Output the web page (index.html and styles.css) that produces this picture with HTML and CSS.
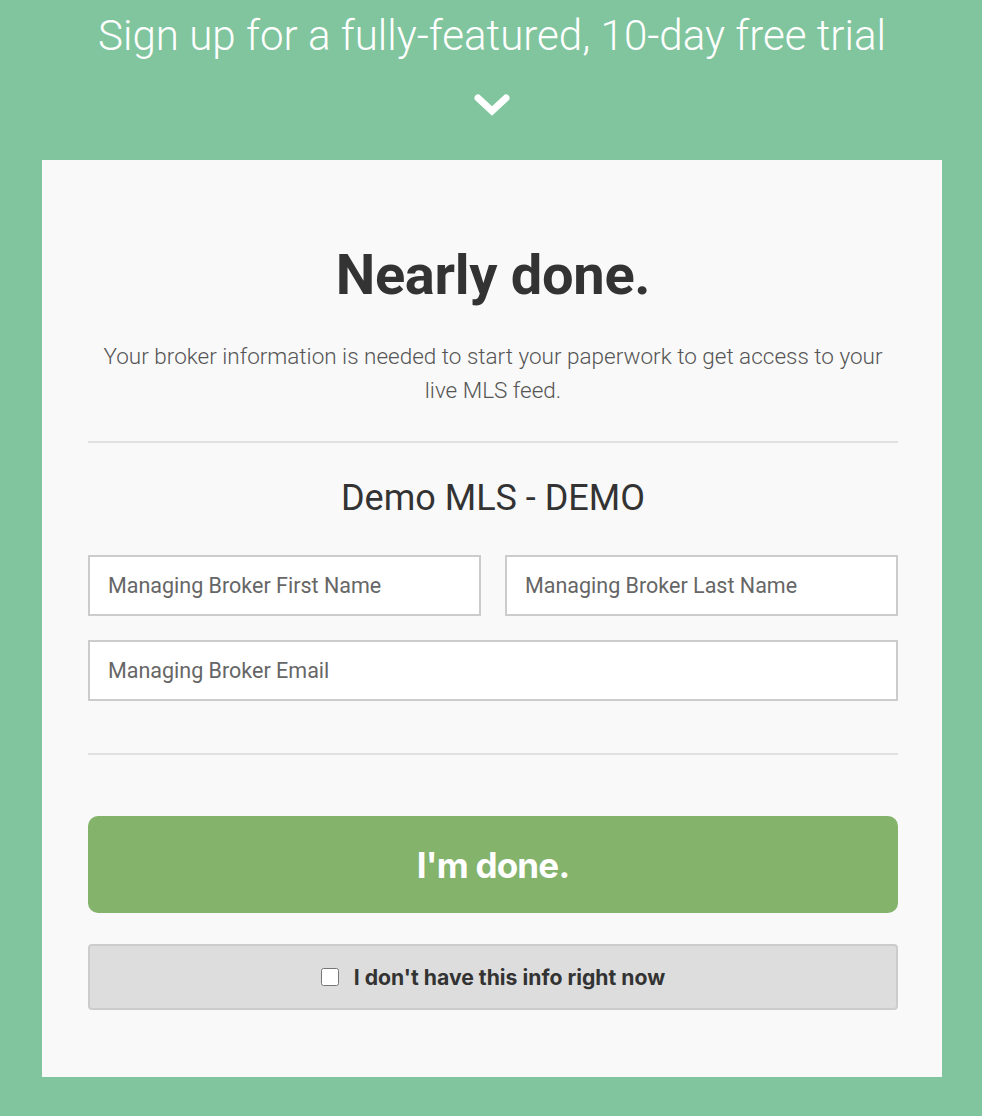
FILE: index.html
```html
<!DOCTYPE html>
<html lang="en">
<head>
<meta charset="utf-8">
<title>Nearly done</title>
<link rel="stylesheet" href="styles.css">
</head>
<body>
<div class="page">
  <header class="hero">
    <h2 class="hero-title">Sign up for a fully-featured, 10-day free trial</h2>
    <svg class="chevron" width="38" height="24" viewBox="0 0 38 24" aria-hidden="true">
      <polyline points="5,5 19,18 33,5" fill="none" stroke="#fff" stroke-width="7" stroke-linejoin="miter" stroke-linecap="round"/>
    </svg>
  </header>
  <main class="card">
    <h1 class="card-title">Nearly done.</h1>
    <p class="card-lead">Your broker information is needed to start your paperwork to get access to your live MLS feed.</p>
    <hr class="divider">
    <h3 class="mls-name">Demo MLS - DEMO</h3>
    <form class="form">
      <div class="row two">
        <input class="field" type="text" placeholder="Managing Broker First Name">
        <input class="field" type="text" placeholder="Managing Broker Last Name">
      </div>
      <div class="row">
        <input class="field" type="email" placeholder="Managing Broker Email">
      </div>
      <hr class="divider lower">
      <button type="button" class="btn-done">I'm done.</button>
      <label class="skip">
        <input type="checkbox" class="skip-box">
        <span>I don't have this info right now</span>
      </label>
    </form>
  </main>
</div>
</body>
</html>
```

FILE: styles.css
```css
* { box-sizing: border-box; }
html, body { margin: 0; padding: 0; }
body {
  background: #80c59e;
  font-family: Roboto, "Liberation Sans", sans-serif;
  color: #333;
}
.page {
  width: 900px;
  margin: 0 40px 0 42px;
  padding-bottom: 40px;
}
.hero {
  display: flex;
  flex-direction: column;
  align-items: center;
  height: 160px;
}
.hero-title {
  margin: 11px 0 0;
  font-weight: 300;
  font-size: 42.1px;
  line-height: 50px;
  color: #fff;
  white-space: nowrap;
}
.chevron {
  margin-top: 32px;
  display: block;
}
.card {
  background: #f9f9f9;
  padding: 80px 44px 67px 46px;
}
.card-title {
  margin: 0;
  text-align: center;
  font-size: 56px;
  font-weight: 700;
  line-height: 70px;
  color: #333;
  letter-spacing: -0.3px;
}
.card-lead {
  margin: 29px 0 0;
  text-align: center;
  font-size: 22.5px;
  font-weight: 300;
  line-height: 34px;
  color: #555;
}
.divider {
  border: 0;
  border-top: 2px solid #e0e0e0;
  margin: 34px 0 0;
}
.mls-name {
  margin: 35px 0 0;
  text-align: center;
  font-size: 36px;
  font-weight: 400;
  line-height: 40px;
  color: #333;
}
.form {
  margin-top: 37px;
}
.row {
  display: flex;
  gap: 24px;
  margin-bottom: 24px;
}
.row.two .field { flex: 1; min-width: 0; }
.field {
  flex: 1;
  height: 61px;
  border: 2px solid #ccc;
  background: #fff;
  padding: 0 18px;
  font-family: Roboto, "Liberation Sans", sans-serif;
  font-size: 21.5px;
  color: #333;
  border-radius: 0;
  outline: none;
}
.field::placeholder { color: #666; }
.divider.lower {
  margin-top: 52px;
}
.btn-done {
  display: block;
  width: 100%;
  height: 97px;
  margin-top: 61px;
  border: 0;
  border-radius: 10px;
  background: #84b36c;
  color: #fff;
  font-family: Inter, "Liberation Sans", sans-serif;
  font-weight: 700;
  font-size: 35px;
  letter-spacing: -0.8px;
  cursor: pointer;
}
.skip {
  margin-top: 31px;
  display: flex;
  align-items: center;
  justify-content: center;
  gap: 15px;
  height: 66px;
  background: #dddddd;
  border: 2px solid #cccccc;
  border-radius: 4px;
  font-family: Inter, "Liberation Sans", sans-serif;
  font-weight: 700;
  font-size: 21.2px;
  color: #333;
  cursor: pointer;
}
.skip-box {
  width: 18px;
  height: 18px;
  margin: 0;
}
```
